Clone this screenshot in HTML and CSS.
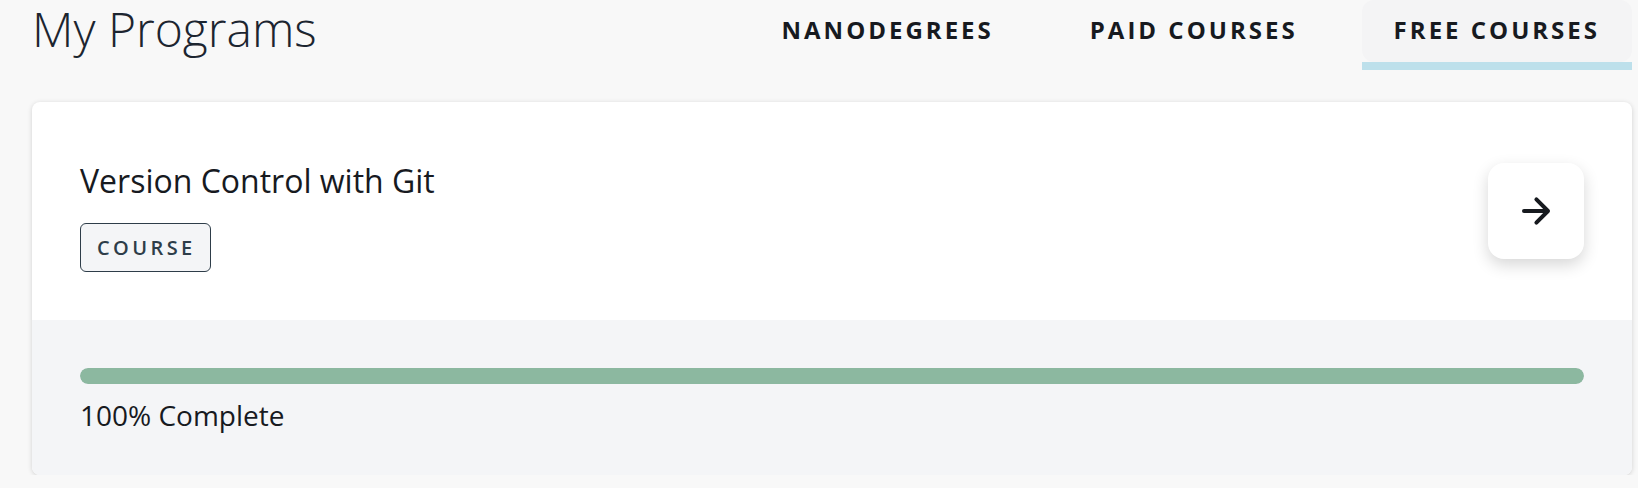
FILE: index.html
```html
<!DOCTYPE html>
<html lang="en">
<head>
<meta charset="utf-8">
<title>My Programs</title>
<link rel="stylesheet" href="styles.css">
</head>
<body>
<div class="page">
  <header class="top">
    <h1 class="heading">My Programs</h1>
    <nav class="tabs">
      <a class="tab"><span class="tab-label">NANODEGREES</span></a>
      <a class="tab"><span class="tab-label">PAID COURSES</span></a>
      <a class="tab active"><span class="tab-label">FREE COURSES</span></a>
    </nav>
  </header>
  <section class="card">
    <div class="card-main">
      <div class="card-info">
        <h2 class="course-title">Version Control with Git</h2>
        <span class="badge">COURSE</span>
      </div>
      <button class="go" aria-label="Open course">
        <svg width="48" height="48" viewBox="0 0 24 24" fill="none" stroke="#171a1f" stroke-width="2" stroke-linecap="round" stroke-linejoin="round"><line x1="6" y1="12" x2="17.6" y2="12"/><polyline points="12.2 6.2 18 12 12.2 17.8"/></svg>
      </button>
    </div>
    <div class="card-foot">
      <div class="bar"><div class="fill" style="width:100%"></div></div>
      <p class="progress-text">100% Complete</p>
    </div>
  </section>
</div>
</body>
</html>
```
FILE: styles.css
```css
* { box-sizing: border-box; }
body {
  margin: 0;
  background: #f8f8f8;
  font-family: "Open Sans", "Noto Sans", sans-serif;
  color: #171a1f;
}
.page {
  width: 1600px;
  margin-left: 32px;
}
.top {
  display: flex;
  justify-content: space-between;
  align-items: flex-start;
  height: 70px;
}
.heading {
  margin: 0;
  font-size: 48px;
  font-weight: 300;
  line-height: 58px;
  color: #1c2530;
}
.tabs {
  display: flex;
  gap: 32px;
}
.tab {
  display: flex;
  flex-direction: column;
  border-bottom: 8px solid transparent;
  cursor: pointer;
}
.tab-label {
  display: block;
  height: 62px;
  padding: 0 32px 2px;
  line-height: 60px;
  font-size: 24px;
  font-weight: 700;
  letter-spacing: 3px;
  color: #171a1f;
  border-radius: 12px;
}
.tab.active {
  border-bottom-color: #bde0eb;
}
.tab.active .tab-label {
  background: #f4f4f5;
}
.card {
  margin-top: 32px;
  background: #fff;
  border-radius: 8px;
  box-shadow: 0 1px 5px rgba(0, 0, 0, 0.16);
  overflow: hidden;
}
.card-main {
  display: flex;
  align-items: center;
  justify-content: space-between;
  padding: 48px;
}
.card-info {
  display: flex;
  flex-direction: column;
  align-items: flex-start;
}
.course-title {
  margin: 11px 0 22px;
  font-size: 32px;
  font-weight: 400;
  line-height: 40px;
  color: #171a1f;
}
.badge {
  display: inline-block;
  padding: 12px 14px 12px 16px;
  border: 1px solid #2e3d49;
  border-radius: 6px;
  background: #f4f5f7;
  font-size: 20px;
  font-weight: 600;
  line-height: 23px;
  letter-spacing: 3.4px;
  color: #2e3d49;
}
.go {
  width: 96px;
  height: 96px;
  border: 0;
  border-radius: 16px;
  background: #fff;
  box-shadow: 0 6px 16px rgba(0, 0, 0, 0.16);
  display: flex;
  align-items: center;
  justify-content: center;
  padding: 0;
  cursor: pointer;
}
.card-foot {
  background: #f4f5f7;
  padding: 48px 48px 39px;
}
.bar {
  height: 16px;
  border-radius: 8px;
  background: #dfe3e8;
  overflow: hidden;
}
.fill {
  height: 100%;
  background: #8cb8a0;
  border-radius: 8px;
}
.progress-text {
  margin: 10px 0 0;
  font-size: 28px;
  line-height: 42px;
  color: #171a1f;
}
```
